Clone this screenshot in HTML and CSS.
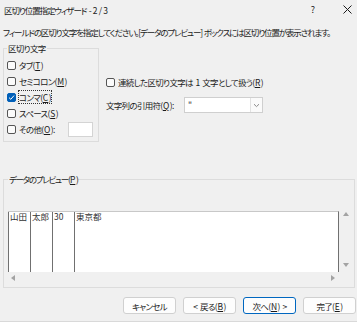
FILE: index.html
```html
<!DOCTYPE html>
<html lang="ja">
<head>
  <meta charset="UTF-8">
  <meta name="viewport" content="width=device-width, initial-scale=1.0">
  <title>区切り位置指定ウィザード - 2 / 3</title>
  <link rel="stylesheet" href="styles.css">
</head>
<body>
  <div class="window">
    <div class="titlebar">
      <span class="title">区切り位置指定ウィザード - 2 / 3</span>
      <span class="tb-btn">?</span>
      <span class="tb-btn">
        <svg width="9" height="9" viewBox="0 0 9 9"><path d="M0.5 0.5L8.5 8.5M8.5 0.5L0.5 8.5" stroke="#1b1b1b" stroke-width="1"/></svg>
      </span>
    </div>

    <div class="content">
      <p class="intro">フィールドの区切り文字を指定してください。[データのプレビュー] ボックスには区切り位置が表示されます。</p>

      <div class="top-row">
        <fieldset class="group delims">
          <legend>区切り文字</legend>
          <div class="check-row"><span class="box"></span><span>タブ(<u>T</u>)</span></div>
          <div class="check-row"><span class="box"></span><span>セミコロン(<u>M</u>)</span></div>
          <div class="check-row">
            <span class="box checked">
              <svg width="7" height="7" viewBox="0 0 7 7"><path d="M1 3.6L2.8 5.3L6 1.6" fill="none" stroke="#fff" stroke-width="1"/></svg>
            </span>
            <span class="focus">コンマ(<u>C</u>)</span>
          </div>
          <div class="check-row"><span class="box"></span><span>スペース(<u>S</u>)</span></div>
          <div class="check-row"><span class="box"></span><span>その他(<u>O</u>):</span><span class="text-input"></span></div>
        </fieldset>

        <div class="options">
          <div class="check-row"><span class="box"></span><span>連続した区切り文字は 1 文字として扱う(<u>R</u>)</span></div>
          <div class="quote-row">
            <span class="quote-label">文字列の引用符(<u>Q</u>):</span>
            <div class="combo">
              <span class="combo-value">"</span>
              <span class="combo-btn">
                <svg width="7" height="5" viewBox="0 0 7 5"><path d="M1 1.2L3.5 3.6L6 1.2" fill="none" stroke="#8a8a8a" stroke-width="1"/></svg>
              </span>
            </div>
          </div>
        </div>
      </div>

      <fieldset class="group preview">
        <legend>データのプレビュー(<u>P</u>)</legend>
        <div class="preview-body">
          <div class="grid">
            <div class="col">山田</div>
            <div class="col">太郎</div>
            <div class="col">30</div>
            <div class="col last">東京都</div>
          </div>
          <div class="vscroll"><span class="arrow up"></span><span class="arrow down"></span></div>
        </div>
        <div class="hscroll"><span class="arrow left"></span><span class="arrow right"></span></div>
      </fieldset>

      <div class="buttons">
        <button>キャンセル</button>
        <button>&lt; 戻る(<u>B</u>)</button>
        <button class="default">次へ(<u>N</u>) &gt;</button>
        <button>完了(<u>E</u>)</button>
      </div>
    </div>
  </div>
</body>
</html>
```

FILE: styles.css
```css
html, body {
  margin: 0;
  padding: 0;
  background: #f0f0f0;
}
body {
  font-family: "Noto Sans CJK JP", "Noto Sans", sans-serif;
  font-size: 8.5px;
  letter-spacing: -0.7px;
  word-spacing: 1.5px;
  color: #1b1b1b;
  font-feature-settings: "palt";
}
u {
  letter-spacing: 0;
  padding: 0 0.5px;
}
.window {
  height: 321px;
  border-bottom: 1px solid #d9d9d9;
  overflow: hidden;
}
.titlebar {
  height: 19px;
  display: flex;
  align-items: center;
  padding-left: 4px;
}
.title {
  flex: 1;
  letter-spacing: -1.1px;
}
.tb-btn {
  width: 20px;
  display: flex;
  justify-content: center;
  letter-spacing: 0;
  font-size: 9px;
}
.tb-btn + .tb-btn {
  margin-left: 14px;
}
.content {
  padding: 0 2px 0 3px;
}
.intro {
  margin: 7px 0 0;
  line-height: 12px;
  letter-spacing: -1.15px;
  word-spacing: 1px;
  white-space: nowrap;
}
.top-row {
  display: flex;
  align-items: flex-start;
  margin-top: 4px;
}
.group {
  margin: 0;
  min-width: 0;
  border: 1px solid #dcdcdc;
}
.group legend {
  padding: 0 1px;
  line-height: 12px;
}
.delims {
  width: 96px;
  box-sizing: border-box;
  padding: 3px 3px 4px 3px;
}
.check-row {
  display: flex;
  align-items: center;
  gap: 3px;
  height: 16px;
  white-space: nowrap;
}
.box {
  width: 9px;
  height: 9px;
  box-sizing: border-box;
  border: 1px solid #555;
  border-radius: 2px;
  background: #fbfbfb;
  flex: none;
}
.box.checked {
  background: #005fb8;
  border-color: #005fb8;
  display: flex;
  align-items: center;
  justify-content: center;
}
.focus {
  outline: 1px dotted #333;
}
.text-input {
  width: 25px;
  height: 15px;
  box-sizing: border-box;
  border: 1px solid #d4d4d4;
  background: #fff;
  margin-left: auto;
  margin-right: 2px;
}
.options {
  margin-left: 7px;
  padding-top: 32px;
}
.quote-row {
  display: flex;
  align-items: center;
  height: 16px;
  margin-top: 7px;
}
.quote-label {
  width: 78px;
  white-space: nowrap;
}
.combo {
  display: flex;
  width: 79px;
  height: 16px;
  box-sizing: border-box;
  border: 1px solid #cfcfcf;
  background: #fff;
}
.combo-value {
  flex: 1;
  padding-left: 3px;
  line-height: 14px;
  color: #333;
}
.combo-btn {
  width: 11px;
  border-left: 1px solid #e2e2e2;
  background: #fafafa;
  display: flex;
  align-items: center;
  justify-content: center;
}
.preview {
  margin-top: 31px;
  padding: 26px 1px 4px 4px;
}
.preview legend {
  letter-spacing: -1.3px;
}
.preview-body {
  display: flex;
  height: 61px;
}
.grid {
  width: 331px;
  box-sizing: border-box;
  display: flex;
  background: #fff;
  border-top: 1px solid #c8c8c8;
  border-right: 1px solid #707070;
  font-size: 8.5px;
  letter-spacing: 0;
  color: #333;
}
.col {
  width: 22px;
  box-sizing: border-box;
  border-left: 1px solid #707070;
  padding-left: 1px;
  line-height: 8px;
  white-space: nowrap;
}
.col.last {
  flex: 1;
}
.vscroll {
  flex: 1;
  display: flex;
  flex-direction: column;
  align-items: center;
  justify-content: space-between;
  padding: 1px 0 5px;
}
.hscroll {
  width: 331px;
  height: 11px;
  box-sizing: border-box;
  padding: 0 4px 0 3px;
  display: flex;
  align-items: center;
  justify-content: space-between;
}
.arrow {
  width: 0;
  height: 0;
  border: 3px solid transparent;
}
.arrow.up {
  border-top: 0;
  border-bottom: 4px solid #a3a3a3;
}
.arrow.down {
  border-bottom: 0;
  border-top: 4px solid #a3a3a3;
}
.arrow.left {
  border-left: 0;
  border-right: 4px solid #a3a3a3;
}
.arrow.right {
  border-right: 0;
  border-left: 4px solid #a3a3a3;
}
.buttons {
  display: flex;
  justify-content: flex-end;
  gap: 7px;
  margin-top: 9px;
  margin-right: -1px;
}
button {
  width: 53px;
  height: 17px;
  padding: 0;
  font: inherit;
  font-feature-settings: inherit;
  letter-spacing: inherit;
  word-spacing: inherit;
  color: #1b1b1b;
  background: #fdfdfd;
  border: 1px solid #d0d0d0;
  border-radius: 3px;
}
button.default {
  border-color: #0067c0;
}
```
